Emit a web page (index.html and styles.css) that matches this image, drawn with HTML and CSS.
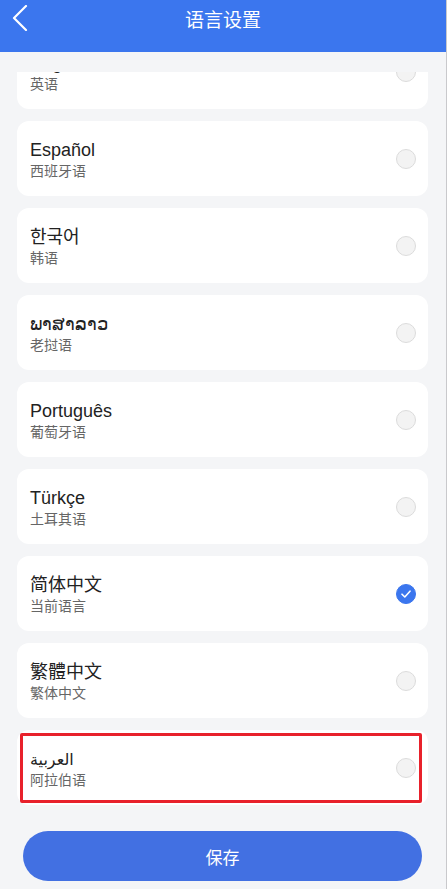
FILE: index.html
```html
<!DOCTYPE html>
<html lang="zh-CN">
<head>
    <meta charset="UTF-8">
    <meta name="viewport" content="width=device-width, initial-scale=1.0">
    <title>语言设置</title>
    <link rel="stylesheet" href="styles.css">
</head>
<body>
    <div class="app">
        <header class="top-bar">
            <button class="back" aria-label="返回">
                <svg width="16" height="26" viewBox="0 0 16 26">
                    <path d="M14 1 L2 13 L14 25" fill="none" stroke="#fff" stroke-width="2.2" stroke-linecap="round" stroke-linejoin="round"/>
                </svg>
            </button>
            <h1>语言设置</h1>
        </header>

        <main class="lang-section">
            <ul class="lang-list">
                <li class="lang-item">
                    <div class="lang-text">
                        <span class="lang-name">English</span>
                        <span class="lang-sub">英语</span>
                    </div>
                    <span class="radio"></span>
                </li>
                <li class="lang-item">
                    <div class="lang-text">
                        <span class="lang-name">Español</span>
                        <span class="lang-sub">西班牙语</span>
                    </div>
                    <span class="radio"></span>
                </li>
                <li class="lang-item">
                    <div class="lang-text">
                        <span class="lang-name">한국어</span>
                        <span class="lang-sub">韩语</span>
                    </div>
                    <span class="radio"></span>
                </li>
                <li class="lang-item">
                    <div class="lang-text">
                        <span class="lang-name lao">ພາສາລາວ</span>
                        <span class="lang-sub">老挝语</span>
                    </div>
                    <span class="radio"></span>
                </li>
                <li class="lang-item">
                    <div class="lang-text">
                        <span class="lang-name">Português</span>
                        <span class="lang-sub">葡萄牙语</span>
                    </div>
                    <span class="radio"></span>
                </li>
                <li class="lang-item">
                    <div class="lang-text">
                        <span class="lang-name">Türkçe</span>
                        <span class="lang-sub">土耳其语</span>
                    </div>
                    <span class="radio"></span>
                </li>
                <li class="lang-item">
                    <div class="lang-text">
                        <span class="lang-name">简体中文</span>
                        <span class="lang-sub">当前语言</span>
                    </div>
                    <span class="radio checked">
                        <svg width="10" height="8" viewBox="0 0 10 8">
                            <path d="M1 4.2 L3.8 7 L9 1.2" fill="none" stroke="#fff" stroke-width="1.6" stroke-linecap="round" stroke-linejoin="round"/>
                        </svg>
                    </span>
                </li>
                <li class="lang-item">
                    <div class="lang-text">
                        <span class="lang-name">繁體中文</span>
                        <span class="lang-sub">繁体中文</span>
                    </div>
                    <span class="radio"></span>
                </li>
                <li class="lang-item highlighted">
                    <div class="lang-text">
                        <span class="lang-name arabic">العربية</span>
                        <span class="lang-sub">阿拉伯语</span>
                    </div>
                    <span class="radio"></span>
                </li>
            </ul>
        </main>

        <footer class="save-bar">
            <button class="save">保存</button>
        </footer>
    </div>
</body>
</html>
```

FILE: styles.css
```css
body {
    margin: 0;
    font-family: "Liberation Sans", "Noto Sans CJK SC", sans-serif;
    background-color: #f4f5f7;
}

.app {
    display: flex;
    flex-direction: column;
    height: 100vh;
    border-right: 1px solid #c9c9cc;
    box-sizing: border-box;
}

.top-bar {
    position: relative;
    height: 52px;
    flex-shrink: 0;
    background-color: #3b76ee;
}

.top-bar h1 {
    margin: 0;
    font-family: "Noto Sans CJK SC", sans-serif;
    font-size: 19px;
    font-weight: 400;
    line-height: 37px;
    color: #fff;
    text-align: center;
}

.back {
    position: absolute;
    left: 12px;
    top: 5px;
    padding: 0;
    border: none;
    background: none;
    cursor: pointer;
}

.lang-section {
    flex: 1;
    margin-top: 20px;
    overflow: hidden;
}

.lang-list {
    list-style: none;
    margin: -38px 0 0;
    padding: 0 18px 0 17px;
    display: flex;
    flex-direction: column;
    gap: 12px;
}

.lang-item {
    position: relative;
    display: flex;
    align-items: center;
    justify-content: space-between;
    height: 75px;
    padding: 0 12px 0 13px;
    background-color: #fff;
    border-radius: 12px;
}

.lang-text {
    display: flex;
    flex-direction: column;
    padding-top: 2px;
}

.lang-name {
    font-size: 18px;
    line-height: 21px;
    color: #222;
}

.lang-sub {
    font-family: "Noto Sans CJK SC", sans-serif;
    font-size: 14px;
    line-height: 18px;
    color: #666;
}

.lang-name.arabic {
    font-family: "DejaVu Sans", sans-serif;
    font-size: 16px;
}

.radio {
    display: flex;
    align-items: center;
    justify-content: center;
    width: 20px;
    height: 20px;
    box-sizing: border-box;
    border: 1px solid #dcdcdc;
    border-radius: 50%;
    background-color: #f3f3f3;
}

.radio.checked {
    border-color: #3b76ee;
    background-color: #3b76ee;
}

.highlighted::after {
    content: "";
    position: absolute;
    left: 3px;
    top: 3px;
    right: 6px;
    bottom: 2px;
    border: 3px solid #e8212b;
    border-radius: 2px;
}

.save-bar {
    flex-shrink: 0;
    padding: 0 24px 8px 23px;
}

.save {
    display: block;
    width: 100%;
    height: 50px;
    border: none;
    border-radius: 25px;
    background-color: #4270e2;
    font-family: "Noto Sans CJK SC", sans-serif;
    font-size: 17px;
    color: #fff;
    cursor: pointer;
}
```
